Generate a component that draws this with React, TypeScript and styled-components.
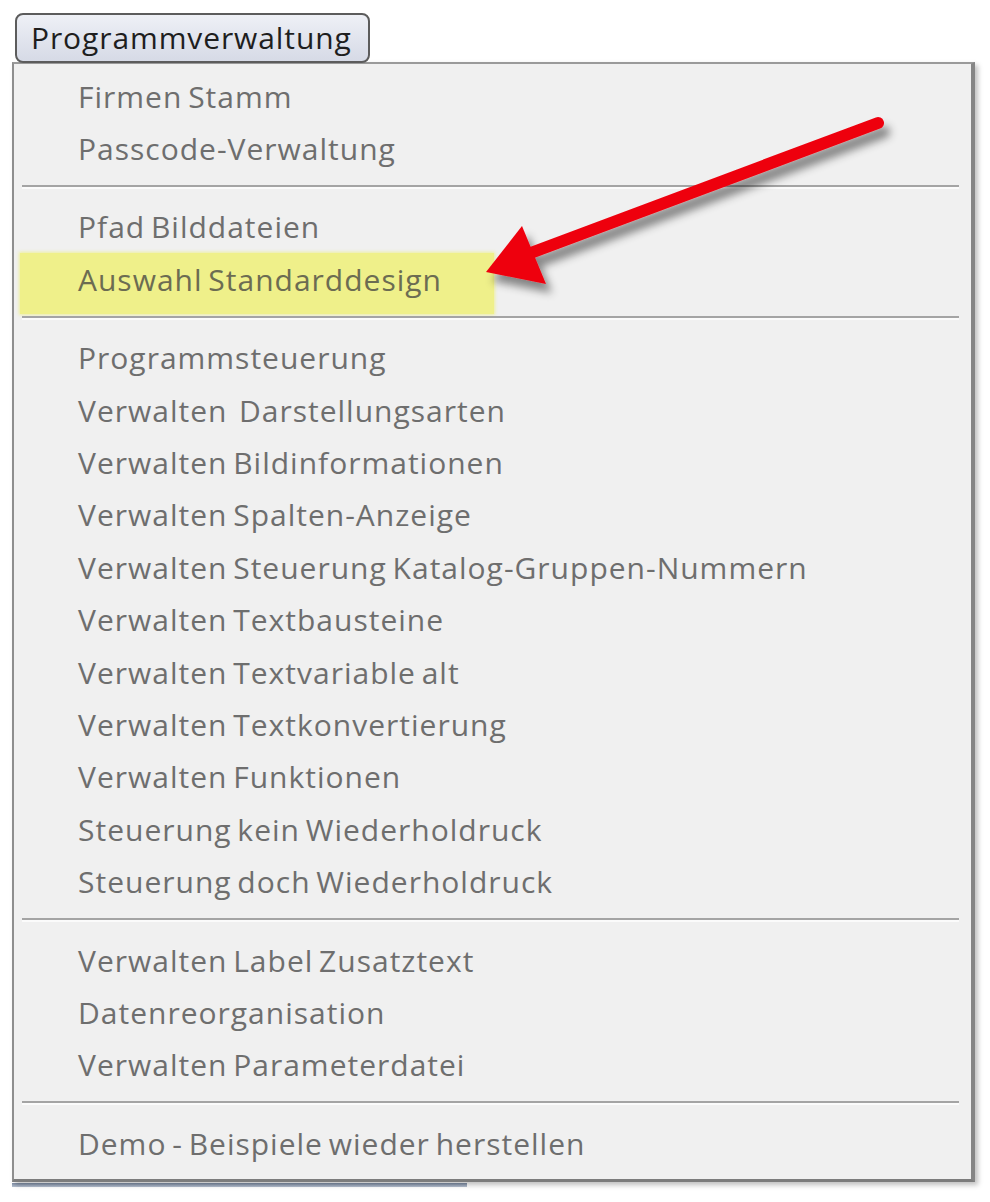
import React from 'react';
import styled, { createGlobalStyle } from 'styled-components';

const GlobalStyle = createGlobalStyle`
  html, body {
    margin: 0;
    padding: 0;
    background: #ffffff;
  }
  body {
    font-family: "Open Sans", "Noto Sans", "Liberation Sans", sans-serif;
  }
`;

const Page = styled.div`
  position: relative;
  width: 990px;
  height: 1202px;
  padding: 13px 0 0 12px;
  box-sizing: border-box;
  overflow: hidden;
`;

const MenuButton = styled.div`
  position: relative;
  z-index: 2;
  display: inline-flex;
  align-items: center;
  height: 50px;
  margin-left: 3px;
  margin-bottom: -1px;
  padding: 0 16px 2px 14px;
  box-sizing: border-box;
  border: 2px solid #5c5c5c;
  border-radius: 8px;
  background: linear-gradient(#eef0f6 0%, #e2e5ee 50%, #d6dae6 100%);
  color: #1e1e1e;
  font-size: 30px;
  letter-spacing: 0.9px;
`;

const MenuPanel = styled.div`
  position: relative;
  width: 963px;
  box-sizing: border-box;
  padding: 6px 0 10px 0;
  background: #f0f0f0;
  border-top: 2px solid #9a9a9a;
  border-left: 2px solid #8e8e8e;
  border-right: 4px solid #858585;
  border-bottom: 3px solid #7c7c7c;
  box-shadow: 3px 3px 5px rgba(0, 0, 0, 0.25);
`;

const Item = styled.div`
  display: flex;
  align-items: center;
  height: 52.4px;
  padding-left: 64px;
  color: #6e6e6e;
  font-size: 30px;
  letter-spacing: 1px;
  word-spacing: -3px;
  white-space: pre;
`;

const Marker = styled.span`
  align-self: flex-start;
  display: inline-flex;
  align-items: center;
  height: 61px;
  line-height: 53px;
  margin-left: -58px;
  padding: 0 52px 8px 58px;
  box-sizing: border-box;
  background: #eff08a;
  box-shadow: 0 0 3px 1px rgba(239, 240, 138, 0.8);
  color: #6c6c52;
`;

const Separator = styled.div`
  height: 24px;
  display: flex;
  flex-direction: column;
  justify-content: center;
  padding: 0 12px 2px 8px;

  &::before {
    content: '';
    display: block;
    height: 2px;
    background: #a4a4a4;
  }

  &::after {
    content: '';
    display: block;
    height: 2px;
    background: #fbfbfb;
  }
`;

const UnderStrip = styled.div`
  width: 455px;
  height: 4px;
  margin-top: 1px;
  background: linear-gradient(#7f8ea6, #b8c2d2);
`;

const ArrowLayer = styled.svg`
  position: absolute;
  left: 470px;
  top: 100px;
  width: 440px;
  height: 220px;
  pointer-events: none;
`;

type Entry = { label: string; marked?: boolean } | 'sep';

const entries: Entry[] = [
  { label: 'Firmen Stamm' },
  { label: 'Passcode-Verwaltung' },
  'sep',
  { label: 'Pfad Bilddateien' },
  { label: 'Auswahl Standarddesign', marked: true },
  'sep',
  { label: 'Programmsteuerung' },
  { label: 'Verwalten  Darstellungsarten' },
  { label: 'Verwalten Bildinformationen' },
  { label: 'Verwalten Spalten-Anzeige' },
  { label: 'Verwalten Steuerung Katalog-Gruppen-Nummern' },
  { label: 'Verwalten Textbausteine' },
  { label: 'Verwalten Textvariable alt' },
  { label: 'Verwalten Textkonvertierung' },
  { label: 'Verwalten Funktionen' },
  { label: 'Steuerung kein Wiederholdruck' },
  { label: 'Steuerung doch Wiederholdruck' },
  'sep',
  { label: 'Verwalten Label Zusatztext' },
  { label: 'Datenreorganisation' },
  { label: 'Verwalten Parameterdatei' },
  'sep',
  { label: 'Demo - Beispiele wieder herstellen' },
];

const Arrow = () => (
  <ArrowLayer viewBox="0 0 440 220">
    <defs>
      <filter id="arrowShadow" x="-20%" y="-30%" width="140%" height="160%">
        <feDropShadow dx="6" dy="9" stdDeviation="4" floodColor="#000" floodOpacity="0.45" />
      </filter>
    </defs>
    <g filter="url(#arrowShadow)">
      <line x1="58" y1="154" x2="408" y2="23" stroke="#ee0010" strokeWidth="12" strokeLinecap="round" />
      <polygon points="16,172 52,126 76,184" fill="#ee0010" />
    </g>
  </ArrowLayer>
);

export default function App() {
  return (
    <Page>
      <GlobalStyle />
      <MenuButton>Programmverwaltung</MenuButton>
      <MenuPanel>
        {entries.map((entry, i) =>
          entry === 'sep' ? (
            <Separator key={i} />
          ) : (
            <Item key={i}>
              {entry.marked ? <Marker>{entry.label}</Marker> : entry.label}
            </Item>
          )
        )}
      </MenuPanel>
      <UnderStrip />
      <Arrow />
    </Page>
  );
}
